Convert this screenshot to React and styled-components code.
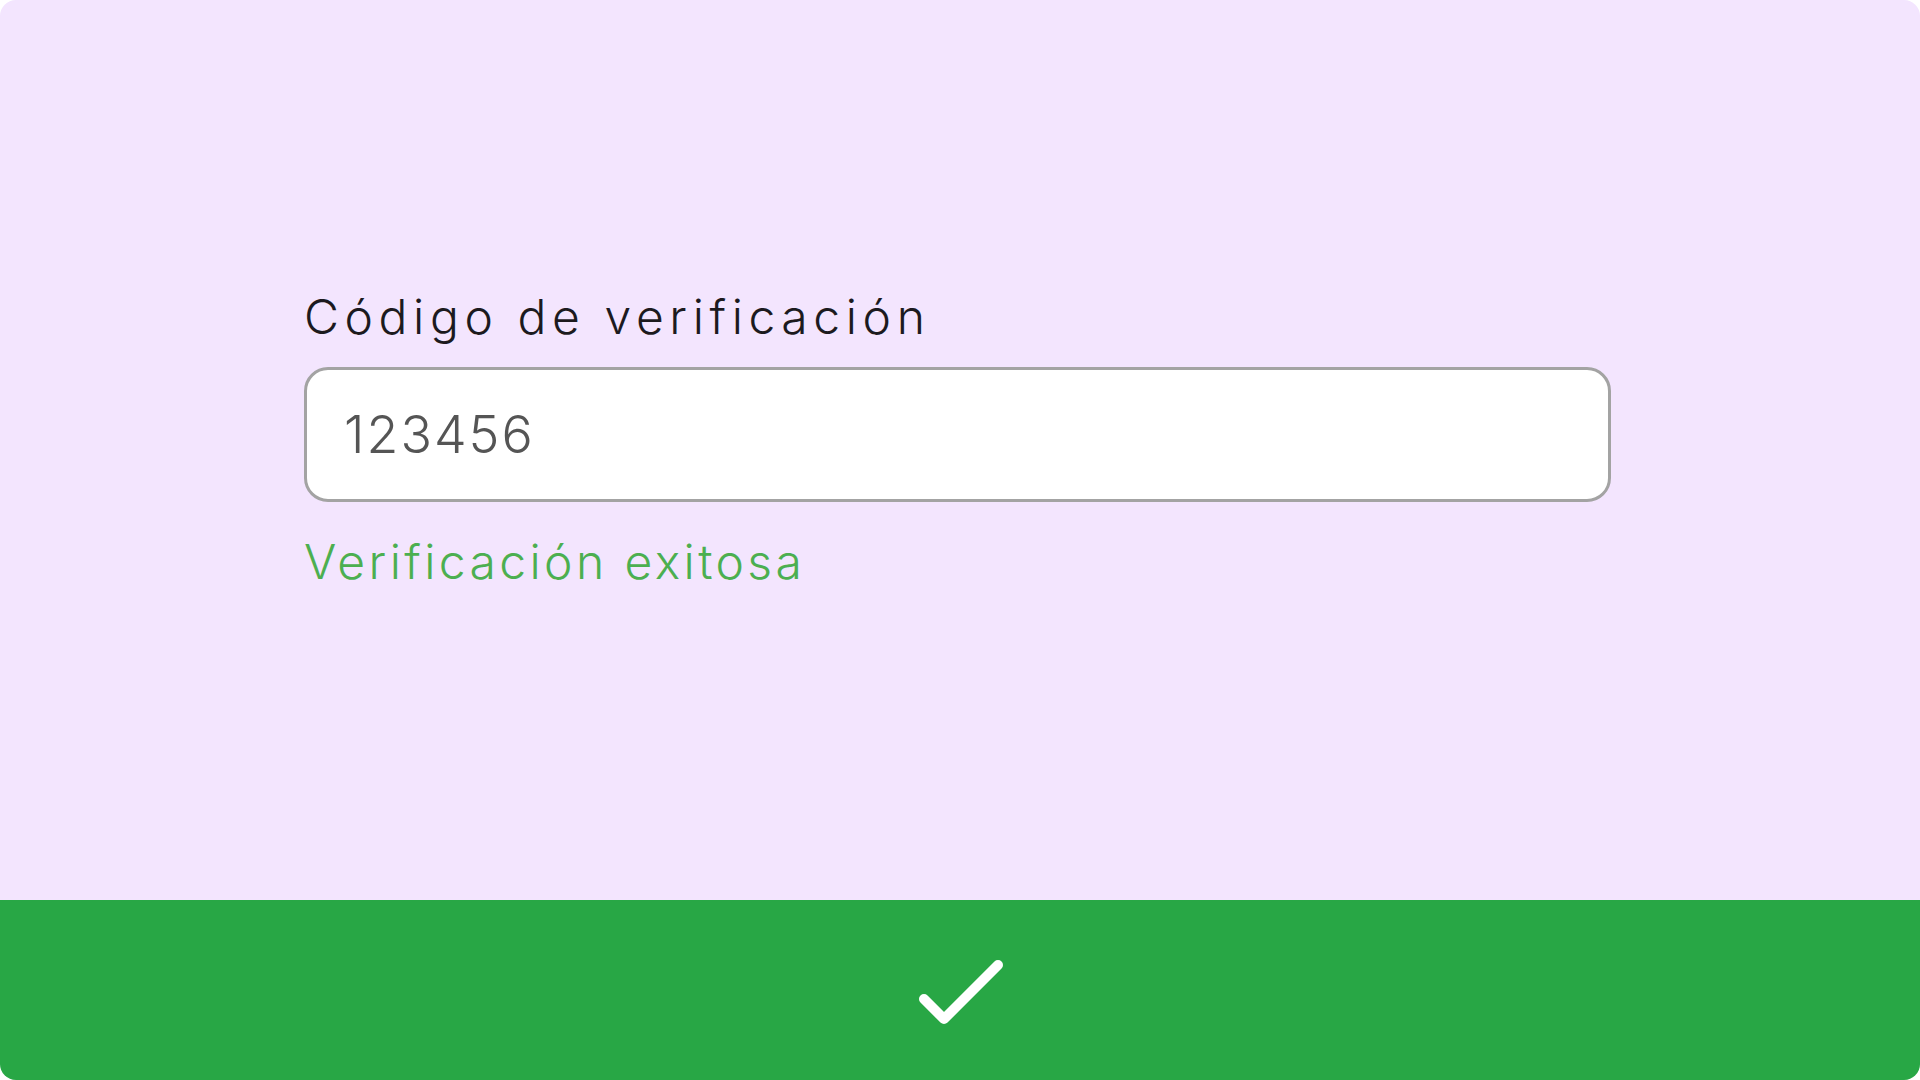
import React from 'react';
import styled, { createGlobalStyle } from 'styled-components';

const GlobalStyle = createGlobalStyle`
  html, body {
    margin: 0;
    padding: 0;
    background: #ffffff;
  }
  * {
    box-sizing: border-box;
  }
`;

const Frame = styled.div`
  width: 1920px;
  height: 1080px;
  border-radius: 16px;
  overflow: hidden;
  display: flex;
  flex-direction: column;
  font-family: Inter, 'Open Sans', sans-serif;
  font-weight: 300;
`;

const Body = styled.div`
  flex: 1;
  background: #f3e5fe;
  display: flex;
  flex-direction: column;
  justify-content: center;
  padding: 0 309px 22px 304px;
`;

const Label = styled.label`
  display: block;
  font-size: 48px;
  line-height: 56px;
  letter-spacing: 5.6px;
  color: #1c1a1e;
  margin-bottom: 22px;
`;

const CodeInput = styled.input`
  width: 100%;
  height: 135px;
  border: 3px solid #a3a3a3;
  border-radius: 24px;
  background: #ffffff;
  padding: 0 0 0 37px;
  font-family: inherit;
  font-weight: 300;
  font-size: 52px;
  letter-spacing: 2px;
  color: #555555;
  outline: none;
`;

const Message = styled.p`
  margin: 32px 0 0;
  font-size: 48px;
  line-height: 56px;
  letter-spacing: 3.4px;
  color: ${p => p.color || '#4caf50'};
`;

const Footer = styled.div`
  height: 180px;
  background: #28a745;
  display: flex;
  align-items: center;
  justify-content: center;
`;

const CheckIcon = () => (
  <svg width="100" height="80" viewBox="0 0 100 80" fill="none">
    <polyline
      points="14,49 34,69 88,15"
      stroke="#ffffff"
      strokeWidth="10"
      strokeLinecap="round"
      strokeLinejoin="round"
    />
  </svg>
);

export default function App() {
  return (
    <Frame>
      <GlobalStyle />
      <Body>
        <Label htmlFor="code">Código de verificación</Label>
        <CodeInput id="code" defaultValue="123456" />
        <Message>Verificación exitosa</Message>
      </Body>
      <Footer>
        <CheckIcon />
      </Footer>
    </Frame>
  );
}
